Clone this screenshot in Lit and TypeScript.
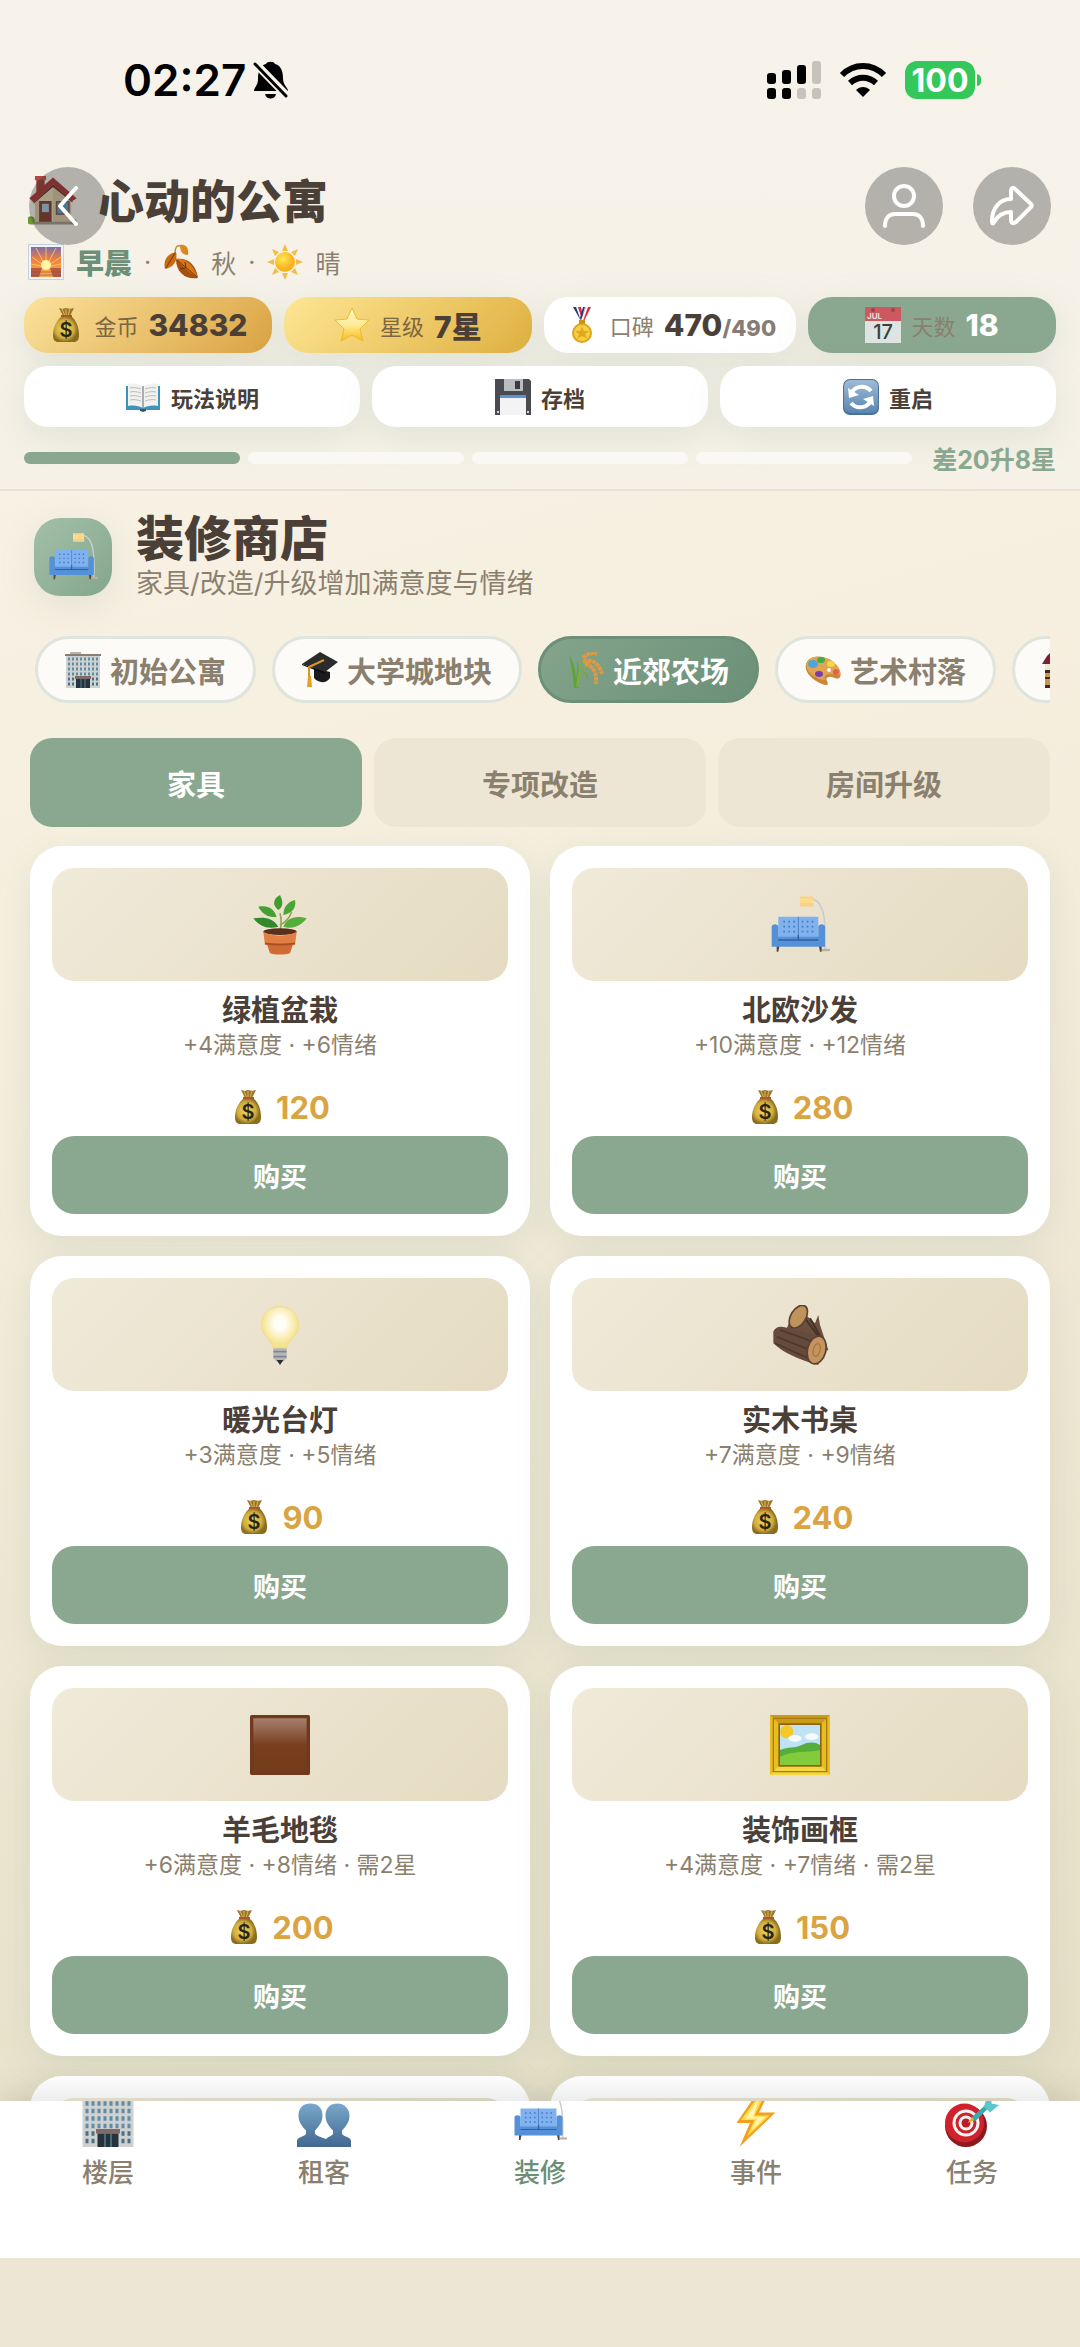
import { LitElement, html, css, svg } from "lit";
import { customElement, state } from "lit/decorators.js";
import { classMap } from "lit/directives/class-map.js";

// every pictogram is drawn in a 36x36 box
const icons = {
  house: svg`
    <path d="M5 15 18 4l13 11v19H5z" fill="#d6c69f" />
    <path d="M18 4v30H8V13z" fill="#e5d8b4" />
    <path d="M6 1h6v9l-6 5z" fill="#96342c" />
    <path d="M5 0h8v3H5z" fill="#b4483e" />
    <path d="M1 16 18 1l17 15-3 2L18 6 4 19z" fill="#a52a2a" />
    <path d="M4 19 18 6l14 12v1L18 8 4 20z" fill="#6a1d1a" />
    <path d="M8 18h9v16H8z" fill="#7c2f22" />
    <path d="M10 20h5v6h-5z" fill="#9fc6de" />
    <path d="M20 18h10v10H20z" fill="#7b4d31" />
    <path d="M21 19h8v8h-8z" fill="#4f93c8" />
    <path d="M3 33h31v2H3z" fill="#9d9280" />
    <circle cx="2" cy="32" r="3" fill="#6c9a2c" />
    <circle cx="33" cy="33" r="2" fill="#55802a" />
  `,
  sunrise: svg`
    <path d="M0 0h36v36H0z" fill="#c4d0e6" />
    <path d="M1 1h34v34H1z" fill="#f4f3f6" />
    <path d="M3 3h30v30H3z" fill="url(#g-dawn)" />
    <path d="m18 23-14-10M18 23 8 4M18 23l0-20M18 23 28 4M18 23l15-10M18 23 3 20M18 23l15-3" stroke="#ffd25a" stroke-width="1" opacity=".8" />
    <path d="M3 24h30v9H3z" fill="#b95a3f" />
    <path d="M14 24h8l3 9H11z" fill="#f6a748" />
    <path d="M3 28h30M3 31h30" stroke="#8d4a52" stroke-width="1" opacity=".6" />
    <circle cx="18" cy="21" r="5" fill="#fff6a8" />
  `,
  leaf: svg`
    <path d="M12 9C12 3 14 1 18 2c2 2 2 4 3 6" fill="none" stroke="#b98a3a" stroke-width="1.4" />
    <path d="M17 1c6-1 9 3 8 10-6 0-8-4-8-10z" fill="#d98a1e" />
    <path d="M13 8C4 10 0 16 2 25c9-2 13-8 11-17z" fill="#c46b14" />
    <path d="M13 15c11-2 20 5 22 19-13 2-22-6-22-19z" fill="#a9500f" />
    <path d="M13 15c11-2 18 8 22 19-8-5-15-11-22-19z" fill="#d4761b" />
    <path d="M12 9 3 24M14 16l20 17M22 18l1 6M17 25l6-1" fill="none" stroke="#783408" stroke-width="1" />
  `,
  sun: svg`
    <path d="m18 0 3 7h-6zM18 36l3-7h-6zM0 18l7-3v6zM36 18l-7-3v6zM5 5l7 3-4 4zM31 5l-3 7-4-4zM5 31l3-7 4 4zM31 31l-7-3 4-4z" fill="#f3bd4a" />
    <circle cx="18" cy="18" r="10" fill="url(#g-sun)" />
  `,
  bag: svg`
    <path d="M11 1c3 1 4 1 7 0 3 1 5 1 8 0l-4 8h-7z" fill="#9a7626" />
    <path d="m14 2 3 7M18 2v7M22 2l-2 7" stroke="#d8b65c" stroke-width="1" />
    <path d="M14 9h9c5 4 8 11 8 19 0 5-2 7-5 7H10c-3 0-5-2-5-7 0-8 4-15 9-19z" fill="url(#g-bag)" />
    <path d="M13 9h11" stroke="#b0552f" stroke-width="2" />
    <text x="18" y="30" text-anchor="middle" font-size="20" font-weight="600" fill="#2c2410">$</text>
  `,
  star: svg`
    <path d="m18 1 5 11 12 1-9 9 3 12-11-6-11 6 3-12-9-9 12-1z" fill="url(#g-star)" stroke="#eebb2c" stroke-width="1" stroke-linejoin="round" />
  `,
  medal: svg`
    <path d="M9 0h5l6 14h-3z" fill="#22357e" />
    <path d="M12 0h2l5 13-2 1z" fill="#f6f4f6" />
    <path d="M14 0h3l2 9-1 3z" fill="#d72b3b" />
    <path d="M27 0h-5l-6 14h4z" fill="#d72b3b" />
    <path d="M24 0h-2l-5 13 2 1z" fill="#f6f4f6" />
    <path d="M21 0h-2l-3 11 1 2z" fill="#22357e" />
    <path d="M15 13h6v4h-6z" fill="#c79316" />
    <circle cx="18" cy="26" r="10" fill="#d9a51c" />
    <circle cx="18" cy="26" r="8" fill="#f8cf40" />
    <path d="m18 19 2 5h5l-4 3 2 5-5-3-5 3 2-5-4-3h5z" fill="#e0aa20" />
  `,
  calendar: svg`
    <path d="M0 0h36v36H0z" fill="#f4f4f6" />
    <path d="M0 0h36v14H0z" fill="#e04553" />
    <circle cx="8" cy="3" r="2" fill="#a02a38" />
    <circle cx="28" cy="3" r="2" fill="#a02a38" />
    <text x="2" y="12" font-size="8" font-weight="600" fill="#ffffff">JUL</text>
    <text x="18" y="32" text-anchor="middle" font-size="20" font-weight="500" fill="#26262a">17</text>
  `,
  book: svg`
    <path d="M1 7h34v24H21l-3 1-3-1H1z" fill="#3f93b8" />
    <path d="M3 5c6-1 11 0 15 2 4-2 9-3 15-2v22c-6-1-11 0-15 2-4-2-9-3-15-2z" fill="#f1f1ee" />
    <path d="M5 9c4-1 8 0 11 1M5 13c4-1 8 0 11 1M5 17c4-1 8 0 11 1M5 21c4-1 8 0 11 1M31 9c-4-1-8 0-11 1M31 13c-4-1-8 0-11 1M31 17c-4-1-8 0-11 1M31 21c-4-1-8 0-11 1" fill="none" stroke="#b9bcc0" stroke-width="1" />
    <path d="M18 7v22" stroke="#8b8f95" stroke-width="1.4" />
    <path d="M15 30h6v2l-3 1-3-1z" fill="#355a6b" />
  `,
  floppy: svg`
    <path d="M0 0h34l2 2v34H0z" fill="#4a4b50" />
    <path d="M9 0h19v12H9z" fill="#b9bcc1" />
    <path d="M20 2h5v8h-5z" fill="#3a3b40" />
    <path d="M5 16h26v20H5z" fill="#f3f3f5" />
    <path d="M5 16h26v3H5z" fill="#5a93d4" />
    <path d="M2 32h2v2H2zM32 32h2v2h-2z" fill="#d8d8db" />
  `,
  refresh: svg`
    <rect x="0" y="0" width="36" height="36" rx="7" fill="#4b7196" />
    <rect x="1" y="1" width="34" height="33" rx="6" fill="url(#g-blue)" />
    <path d="M8 15c3-8 14-10 20-3M28 21c-3 8-14 10-20 3" fill="none" stroke="#ffffff" stroke-width="4" />
    <path d="m5 9 1 10 10-3zM31 27l-1-10-10 3z" fill="#ffffff" />
  `,
  sofa: svg`
    <path d="M23 2c8 0 11 8 10 31" fill="none" stroke="#c9cdd2" stroke-width="1" />
    <path d="M31 33h5" stroke="#b9b2a9" stroke-width="1.4" />
    <path d="M18 1h8v5h-8z" fill="#fbdc8a" />
    <path d="M18 1h8v1h-8zM18 5h8v2h-8z" fill="#f6cf94" />
    <path d="M4 29h2l-1 5H4zM29 29h2v5h-1z" fill="#59443a" />
    <path d="M5 13h12v13H5zM17 13h12v13H17z" fill="#7fb2ee" />
    <path d="M17 13v13" stroke="#4f83c6" stroke-width=".6" />
    <path d="M8 16h8M8 19h8M8 22h8M19 16h9M19 19h9M19 22h9" stroke="#477bc0" stroke-width="1" stroke-dasharray="1 2" />
    <path d="M1 19c0-2 4-2 4 0v6h24v-6c0-2 4-2 4 0v12H1z" fill="#5591d8" />
    <path d="M5 27h24M17 24v3" stroke="#335f9c" stroke-width=".8" />
  `,
  building: svg`
    <path d="M5 0h11v3H5z" fill="#b9b4b0" />
    <path d="M1 3h34v33H1z" fill="#cfd1cf" />
    <path d="M0 2h36v2H0z" fill="#8d7c74" />
    <path d="M3 7h30M3 12h30M3 17h30M3 22h30" stroke="#5f8ba6" stroke-width="3" stroke-dasharray="2 2" />
    <path d="M3 27h6M3 32h6M27 27h6M27 32h6" stroke="#4a7088" stroke-width="3" stroke-dasharray="2 2" />
    <path d="M10 24h16v3H10z" fill="#7e6a66" />
    <path d="M11 27h14v9H11z" fill="#24343e" />
    <path d="M16 27v9M20 27v9" stroke="#5f7c8b" stroke-width="1" />
  `,
  cap: svg`
    <path d="M12 16 28 20v6c-4 6-12 5-16 0z" fill="#1b1b1d" />
    <path d="M0 12 18 0l18 10-13 10z" fill="#2b2b2e" />
    <path d="m0 12 23 8v2L0 13z" fill="#0e0e10" />
    <path d="M22 8 7 15v10" fill="none" stroke="#d99422" stroke-width="2" />
    <path d="M6 24h3l1 11H5z" fill="#e9a02a" />
  `,
  rice: svg`
    <path d="M6 36C5 22 3 12 1 3c5 8 7 17 7 25 1-8 2-13 1-20 3 8 2 18 1 28z" fill="#5ea338" />
    <path d="M9 35C10 20 13 9 18 5M10 31c2-10 6-17 12-19" fill="none" stroke="#7fae45" stroke-width="1.4" />
    <path d="M15 6C19 2 24 0 29 2M15 10c8-3 15-1 19 12M17 12c8 1 12 8 11 20" fill="none" stroke="#dd9a42" stroke-width="4" stroke-dasharray="4 .6" />
    <path d="M15 20c3 1 4 3 5 7" fill="none" stroke="#6fa83f" stroke-width="1.4" />
  `,
  palette: svg`
    <path d="M1 12C4 3 17 3 27 9c7 5 10 12 8 16-2 3-5 1-8 0-4-1-7 1-5 4 2 4 0 5-5 3C7 28-1 20 1 12z" fill="#c98636" />
    <path d="M2 11C5 3 17 3 26 8c7 5 10 11 9 14-2 3-6 0-9 0-5 0-7 2-6 6C10 27-1 19 2 11z" fill="#e0a455" />
    <ellipse cx="8" cy="12" rx="5" ry="4" fill="#4aa6dc" />
    <ellipse cx="16" cy="8" rx="4" ry="3" fill="#3fae49" />
    <ellipse cx="26" cy="12" rx="4" ry="3" fill="#f4d643" />
    <ellipse cx="14" cy="22" rx="4" ry="3" fill="#7a3aa8" />
    <ellipse cx="31" cy="20" rx="3" ry="3" fill="#e6604a" />
    <ellipse cx="24" cy="18" rx="2" ry="2" fill="#fbfaf5" />
  `,
  castle: svg`
    <path d="m0 12 5-8 3-3h20l8 11z" fill="#7c2036" />
    <path d="M3 12h30v6H3z" fill="#f1e6cf" />
    <path d="M3 18h30v18H3z" fill="#c79a4a" />
    <path d="M3 18h30v3H3zM3 25h30v2H3zM3 33h30v3H3z" fill="#3c2b1d" />
    <path d="M14 26h8v10h-8z" fill="#4a2a18" />
  `,
  plant: svg`
    <path d="M18 22c1-5 1-8 0-11M18 18c4-2 6-5 7-8" fill="none" stroke="#93a558" stroke-width="1" />
    <path d="M17 9c-4-3-3-7 1-9 2 4 2 7-1 9z" fill="#3f9c2e" />
    <path d="M20 12c0-5 3-8 7-9 1 5-2 8-7 9z" fill="#4aa534" />
    <path d="M16 13C11 14 7 11 5 7c6-1 9 1 11 6z" fill="#44a030" />
    <path d="M17 19C10 21 5 18 2 14c7-1 12 0 15 5z" fill="#338a2a" />
    <path d="M20 19c2-5 7-7 14-5-3 4-8 7-14 5z" fill="#55ad3c" />
    <ellipse cx="18" cy="22" rx="10" ry="2" fill="#5b2f1b" />
    <path d="M8 22c5 3 15 3 20 0l-1 8H9z" fill="#e27f45" />
    <path d="M10 29h16l-2 6c-2 1-10 1-12 0z" fill="#cf6c36" />
    <path d="M9 29c6 1 12 1 18 0" fill="none" stroke="#a84f22" stroke-width="1" />
  `,
  bulb: svg`
    <path d="M18 1c7 0 11 5 11 11 0 7-6 8-7 14h-8c-1-6-7-7-7-14C7 6 11 1 18 1z" fill="url(#g-bulb)" stroke="#f2dd84" stroke-width=".6" />
    <path d="M14 26h8v6l-2 2h-4l-2-2z" fill="#b4b6ba" />
    <path d="M14 28h8M14 31h8" stroke="#85878c" stroke-width="1" />
    <path d="M16 33h4l-2 3z" fill="#2d2d30" />
  `,
  wood: svg`
    <path d="M16 1 27 11l2-5 1 6 5 15-12 3-13-16z" fill="#6b5040" />
    <path d="M24 8l9 16M21 8l9 12" stroke="#46332a" stroke-width="1.2" />
    <ellipse cx="17" cy="7" rx="5" ry="8" transform="rotate(32 17 7)" fill="#5a4134" />
    <ellipse cx="17" cy="7" rx="4" ry="7" transform="rotate(32 17 7)" fill="#bf935a" />
    <path d="M2 16c2-4 6-3 9-2l20 5-2 17c-12-3-22-8-27-13z" fill="#664a3b" />
    <path d="M6 15l20 7M4 19l20 8M3 23l20 9" stroke="#4c382d" stroke-width="1" />
    <ellipse cx="28" cy="27" rx="6" ry="9" transform="rotate(14 28 27)" fill="#5a4134" />
    <ellipse cx="28" cy="27" rx="5" ry="8" transform="rotate(14 28 27)" fill="#c4935f" />
    <ellipse cx="28" cy="27" rx="2" ry="4" transform="rotate(14 28 27)" fill="none" stroke="#a97743" stroke-width=".8" />
  `,
  rug: svg`
    <rect x="0" y="0" width="36" height="36" rx="1" fill="#71391b" />
    <path d="M2 2h32v32H2z" fill="url(#g-rug)" />
  `,
  frame: svg`
    <path d="M0 0h36v36H0z" fill="#e8bd22" />
    <path d="m0 0 6 6h24l6-6z" fill="#c99b18" />
    <path d="m0 36 6-6h24l6 6z" fill="#f6d740" />
    <path d="M2 2h32v32H2z" fill="none" stroke="#a97b12" stroke-width=".8" />
    <path d="M5 5h26v26H5z" fill="#8f6414" />
    <path d="M6 6h24v24H6z" fill="#bfe2f5" />
    <circle cx="10" cy="10" r="4" fill="#f7c926" />
    <ellipse cx="15" cy="14" rx="4" ry="2" fill="#f7f9fc" />
    <ellipse cx="25" cy="13" rx="4" ry="2" fill="#f7f9fc" />
    <path d="M6 21c5-2 9-1 13-3s8-2 11 0v12H6z" fill="#55ad3c" />
    <path d="M6 25c9-4 16-2 24-4v9H6z" fill="#84cb3c" />
  `,
  users: svg`
    <path d="M19 36v-4c0-3 5-3 5-5v-2c-3-3-5-6-5-10 0-5 3-8 8-8 4 0 8 3 8 8 0 4-2 7-5 10v2c0 2 6 2 6 5v4z" fill="url(#g-user)" />
    <path d="M0 36v-4c0-3 6-3 6-5v-2c-3-3-5-6-5-10 0-5 3-8 8-8s8 3 8 8c0 4-2 7-5 10v2c0 2 9 3 10 6v3z" fill="url(#g-user)" />
  `,
  bolt: svg`
    <path d="M18 1 5 20h9L7 36l24-23H20l6-12z" fill="#f59f1f" />
    <path d="M19 3 8 18h9l-5 11 15-14H17l6-12z" fill="#ffe054" />
    <path d="M20 4 11 17h8l-4 8 9-9h-8z" fill="#fff6b5" />
  `,
  target: svg`
    <circle cx="14" cy="22" r="14" fill="#8c1820" />
    <ellipse cx="13" cy="20" rx="13" ry="13" fill="#d0222d" />
    <circle cx="14" cy="20" r="9" fill="#fbf3f2" />
    <circle cx="14" cy="20" r="7" fill="#c8242e" />
    <circle cx="14" cy="20" r="5" fill="#fbf3f2" />
    <circle cx="14" cy="20" r="3" fill="#b91e28" />
    <path d="m15 20 3-4 2 2z" fill="#f0b429" />
    <path d="M18 16 28 7l2 2-10 10z" fill="#35aab5" />
    <path d="m26 9 2-6 3 0 0 4 5 1-6 5z" fill="#5cc6cd" />
  `,
};

type IconName = keyof typeof icons;

interface Item {
  icon: IconName;
  name: string;
  desc: string;
  price: number;
}

const regions: { icon: IconName; name: string }[] = [
  { icon: "building", name: "初始公寓" },
  { icon: "cap", name: "大学城地块" },
  { icon: "rice", name: "近郊农场" },
  { icon: "palette", name: "艺术村落" },
  { icon: "castle", name: "" },
];

const items: Item[] = [
  { icon: "plant", name: "绿植盆栽", desc: "+4满意度 · +6情绪", price: 120 },
  { icon: "sofa", name: "北欧沙发", desc: "+10满意度 · +12情绪", price: 280 },
  { icon: "bulb", name: "暖光台灯", desc: "+3满意度 · +5情绪", price: 90 },
  { icon: "wood", name: "实木书桌", desc: "+7满意度 · +9情绪", price: 240 },
  { icon: "rug", name: "羊毛地毯", desc: "+6满意度 · +8情绪 · 需2星", price: 200 },
  { icon: "frame", name: "装饰画框", desc: "+4满意度 · +7情绪 · 需2星", price: 150 },
];

const navItems: { icon: IconName; name: string }[] = [
  { icon: "building", name: "楼层" },
  { icon: "users", name: "租客" },
  { icon: "sofa", name: "装修" },
  { icon: "bolt", name: "事件" },
  { icon: "target", name: "任务" },
];

@customElement("app-root")
export class AppRoot extends LitElement {
  @state() region = 2;
  @state() tab = 0;
  @state() nav = 2;

  static styles = css`
    :host {
      --green: #8aa890;
      --green-dark: #6b8f77;
      --ink: #4a4038;
      --muted: #8b7f6e;
      --gold: #d9a441;
      --shadow: 0 10px 36px rgba(107, 143, 119, 0.14);
      display: flex;
      flex-direction: column;
      height: 100vh;
      overflow: hidden;
      box-sizing: border-box;
      color: var(--ink);
      background: linear-gradient(165deg, #f9f4ea 0%, #f6efdf 35%, #e7e0c8 88%, #e4ddc4 100%);
      font-family: Inter, "Noto Sans CJK SC", sans-serif;
      font-size: 22px;
    }

    * {
      box-sizing: border-box;
    }

    h1,
    h2,
    h3,
    p {
      margin: 0;
    }

    button {
      margin: 0;
      padding: 0;
      border: 0;
      background: none;
      color: inherit;
      font: inherit;
      cursor: pointer;
    }

    svg {
      display: block;
      flex: none;
    }

    .defs {
      position: absolute;
    }

    .icon {
      width: 36px;
      height: 36px;
    }

    .icon.medium {
      width: 50px;
      height: 50px;
    }

    .icon.large {
      width: 60px;
      height: 60px;
    }

    header {
      position: relative;
      flex: none;
      padding: 0 24px 13px;
      border-bottom: 2px solid #e6e3d9;
      background: linear-gradient(180deg, #f7f3eb, #f5f1e6);
    }

    .status {
      display: flex;
      align-items: center;
      justify-content: space-between;
      height: 167px;
      padding: 0 75px 8px 99px;
      color: #000000;
    }

    .status div {
      display: flex;
      align-items: center;
      gap: 18px;
    }

    .status .clock {
      gap: 7px;
      font-size: 44px;
      font-weight: 600;
    }

    .battery {
      font-size: 32px;
      font-weight: 700;
    }

    .title-row {
      display: flex;
      align-items: center;
      gap: 30px;
      height: 78px;
      padding-right: 5px;
    }

    .title-row h1 {
      display: flex;
      align-items: center;
      gap: 20px;
      flex: 1;
      padding: 0 0 10px 4px;
      font-size: 46px;
      line-height: 56px;
      font-weight: 900;
    }

    .round {
      display: grid;
      place-items: center;
      width: 78px;
      height: 78px;
      border-radius: 50%;
      background: rgba(60, 60, 60, 0.36);
    }

    .round.back {
      position: absolute;
      top: 167px;
      left: 29px;
    }

    .season {
      display: flex;
      align-items: center;
      gap: 12px;
      height: 34px;
      padding-left: 4px;
      color: var(--muted);
      font-size: 25px;
    }

    .season strong {
      color: var(--green-dark);
      font-size: 28px;
      font-weight: 900;
    }

    .stats,
    .actions {
      display: flex;
      gap: 12px;
    }

    .stats {
      margin-top: 18px;
    }

    .stat {
      display: flex;
      flex: 1;
      align-items: center;
      justify-content: center;
      gap: 10px;
      height: 56px;
      padding: 0 20px;
      border-radius: 24px;
      background: #ffffff;
      box-shadow: var(--shadow);
      white-space: nowrap;
    }

    .stat span {
      color: var(--muted);
    }

    .stat strong {
      font-size: 30px;
      font-weight: 800;
    }

    .stat small {
      color: #857d75;
      font-size: 22px;
    }

    .stat.coin {
      background: linear-gradient(135deg, #fbe29c, #dba343);
    }

    .stat.level {
      background: linear-gradient(135deg, #fee694, #dfb040);
    }

    .stat.coin span,
    .stat.level span {
      color: #7d6642;
    }

    .stat.day {
      background: var(--green);
      color: #ffffff;
    }

    .stat.day .icon {
      opacity: 0.8;
    }

    .actions {
      margin-top: 13px;
    }

    .actions button {
      display: flex;
      flex: 1;
      align-items: center;
      justify-content: center;
      gap: 10px;
      height: 61px;
      border-radius: 24px;
      background: #ffffff;
      box-shadow: var(--shadow);
      font-weight: 700;
    }

    .progress {
      display: flex;
      align-items: center;
      gap: 8px;
      height: 36px;
      margin-top: 13px;
      color: var(--green);
      font-size: 25px;
      font-weight: 700;
    }

    .progress i {
      flex: 1;
      height: 12px;
      border-radius: 6px;
      background: #faf8f4;
    }

    .progress i.done {
      background: var(--green);
    }

    .progress span {
      margin-left: 12px;
    }

    main {
      flex: 1;
      min-height: 0;
      overflow: hidden;
      padding: 24px 30px 0;
    }

    .heading {
      display: flex;
      align-items: center;
      gap: 24px;
      height: 84px;
      padding-left: 4px;
    }

    .badge {
      display: grid;
      place-items: center;
      width: 78px;
      height: 78px;
      border-radius: 26px;
      background: linear-gradient(135deg, #a3c0a9, #84a68c);
      box-shadow: var(--shadow);
    }

    .heading h2 {
      font-size: 48px;
      line-height: 54px;
      font-weight: 900;
    }

    .heading p {
      color: var(--muted);
      font-size: 27px;
      line-height: 36px;
    }

    .regions {
      display: flex;
      gap: 16px;
      overflow: hidden;
      margin-top: 37px;
      padding-left: 5px;
    }

    .regions button {
      display: flex;
      flex: none;
      align-items: center;
      gap: 9px;
      height: 67px;
      padding: 0 27px;
      border: 3px solid #dfe4dc;
      border-radius: 34px;
      background: #fcfbf7;
      color: var(--muted);
      font-size: 29px;
      font-weight: 700;
    }

    .regions button.active {
      border-color: var(--green-dark);
      background: linear-gradient(135deg, #84a58c, #6b8f77);
      color: #ffffff;
    }

    .tabs {
      display: grid;
      grid-template-columns: repeat(3, 1fr);
      gap: 12px;
      margin-top: 35px;
    }

    .tabs button {
      height: 89px;
      border-radius: 22px;
      background: #ede6d5;
      color: var(--muted);
      font-size: 29px;
      font-weight: 700;
    }

    .tabs button.active {
      background: var(--green);
      color: #ffffff;
    }

    .grid {
      display: grid;
      grid-template-columns: 1fr 1fr;
      gap: 20px;
      margin-top: 19px;
    }

    .card {
      display: flex;
      flex-direction: column;
      padding: 22px;
      border-radius: 32px;
      background: #ffffff;
      box-shadow: var(--shadow);
      text-align: center;
    }

    .preview {
      display: grid;
      place-items: center;
      height: 113px;
      border-radius: 22px;
      background: linear-gradient(135deg, #f0ead9, #e5dbc2);
    }

    .card h3 {
      margin-top: 12px;
      font-size: 29px;
      line-height: 36px;
      font-weight: 700;
    }

    .card p {
      color: var(--muted);
      font-size: 23px;
      line-height: 32px;
    }

    .price {
      display: flex;
      align-items: center;
      justify-content: center;
      gap: 10px;
      height: 36px;
      margin-top: 28px;
      color: var(--gold);
      font-size: 31px;
      font-weight: 700;
    }

    .buy {
      height: 78px;
      margin-top: 11px;
      border-radius: 22px;
      background: var(--green);
      color: #ffffff;
      font-size: 27px;
      font-weight: 700;
    }

    nav {
      position: relative;
      display: grid;
      grid-template-columns: repeat(5, 1fr);
      flex: none;
      height: 157px;
      overflow: hidden;
      background: #ffffff;
      box-shadow: 0 -6px 30px rgba(74, 90, 80, 0.16);
    }

    nav button {
      display: flex;
      flex-direction: column;
      align-items: center;
      gap: 10px;
      height: 96px;
      margin-top: -8px;
      color: var(--muted);
      font-size: 26px;
      line-height: 32px;
      font-weight: 500;
    }

    nav .icon {
      width: 54px;
      height: 54px;
    }

    nav button.active {
      color: var(--green-dark);
    }

    nav button.active .icon {
      transform: translateY(-4px);
    }

    footer {
      position: relative;
      flex: none;
      height: 89px;
      background: #ede6d5;
    }
  `;

  renderIcon(name: IconName, size = "") {
    return html`<svg class="icon ${size}" viewBox="0 0 36 36" fill="none" aria-hidden="true">
      ${icons[name]}
    </svg>`;
  }

  renderDefs() {
    return html`
      <svg class="defs" width="0" height="0" aria-hidden="true">
        <linearGradient id="g-dawn" x2="0" y2="1">
          <stop stop-color="#7a6fae" />
          <stop offset=".4" stop-color="#ee7d45" />
          <stop offset="1" stop-color="#fbb03b" />
        </linearGradient>
        <radialGradient id="g-sun" cx=".4" cy=".35">
          <stop stop-color="#ffe957" />
          <stop offset="1" stop-color="#f8b31c" />
        </radialGradient>
        <radialGradient id="g-bag" cx=".45" cy=".5">
          <stop stop-color="#f0d763" />
          <stop offset=".7" stop-color="#d0ad3c" />
          <stop offset="1" stop-color="#8b6d1e" />
        </radialGradient>
        <linearGradient id="g-star" x2="0" y2="1">
          <stop stop-color="#fff6c9" />
          <stop offset=".5" stop-color="#ffec9a" />
          <stop offset="1" stop-color="#f9bb16" />
        </linearGradient>
        <linearGradient id="g-blue" x2="0" y2="1">
          <stop stop-color="#9dbbd6" />
          <stop offset="1" stop-color="#5a86b1" />
        </linearGradient>
        <radialGradient id="g-bulb" cy=".4">
          <stop offset=".3" stop-color="#fffef6" />
          <stop offset="1" stop-color="#f6e38e" />
        </radialGradient>
        <linearGradient id="g-rug" x2="0" y2="1">
          <stop stop-color="#a5806f" />
          <stop offset=".5" stop-color="#793f1f" />
          <stop offset="1" stop-color="#733c1a" />
        </linearGradient>
        <linearGradient id="g-user" x2="0" y2="1">
          <stop stop-color="#79a7cb" />
          <stop offset="1" stop-color="#42688f" />
        </linearGradient>
      </svg>
    `;
  }

  renderStatus() {
    return html`
      <div class="status">
        <div class="clock">
          02:27
          <svg width="36" height="38" viewBox="0 0 36 38" aria-hidden="true">
            <path d="M1 30c0-4 4-5 4-12C5 9 8 4 13 3c1-3 8-3 9 0 5 1 8 6 8 14 0 8 5 9 5 13z" />
            <path d="M12 33h11c-1 6-10 6-11 0z" />
            <path d="m3 3 31 32" stroke="#f7f3eb" stroke-width="8" />
            <path d="m2 3 31 32" stroke="#000000" stroke-width="3" stroke-linecap="round" />
          </svg>
        </div>
        <div>
          <svg width="54" height="38" viewBox="0 0 54 38" aria-hidden="true">
            <rect x="0" y="12" width="9" height="11" rx="3" />
            <rect x="15" y="9" width="9" height="14" rx="3" />
            <rect x="30" y="4" width="9" height="19" rx="3" />
            <rect x="45" y="0" width="9" height="23" rx="3" fill="#c6c3bc" />
            <rect x="0" y="27" width="9" height="11" rx="3" />
            <rect x="15" y="27" width="9" height="11" rx="3" />
            <rect x="30" y="27" width="9" height="11" rx="3" fill="#c6c3bc" />
            <rect x="45" y="27" width="9" height="11" rx="3" fill="#c6c3bc" />
          </svg>
          <svg width="48" height="36" viewBox="0 0 48 36" aria-hidden="true">
            <path d="M3 13c12-12 30-12 42 0" fill="none" stroke="#000000" stroke-width="6" />
            <path d="M11 21c8-7 18-7 26 0" fill="none" stroke="#000000" stroke-width="6" />
            <path d="M17 28c4-4 10-4 14 0l-7 7z" />
          </svg>
          <svg class="battery" width="76" height="38" viewBox="0 0 76 38" role="img" aria-label="100%">
            <rect width="70" height="38" rx="12" fill="#34c759" />
            <path d="M72 13c6 1 6 11 0 12z" fill="#34c759" />
            <text x="35" y="31" text-anchor="middle" fill="#ffffff">100</text>
          </svg>
        </div>
      </div>
    `;
  }

  renderHeader() {
    return html`
      <header>
        ${this.renderStatus()}
        <div class="title-row">
          <h1>${this.renderIcon("house", "medium")}心动的公寓</h1>
          <button class="round" aria-label="个人">
            <svg width="42" height="44" viewBox="0 0 42 44" fill="none" stroke="#ffffff" stroke-width="4" stroke-linecap="round">
              <circle cx="21" cy="12" r="10" />
              <path d="M2 42c0-8 4-12 10-12h18c6 0 10 4 10 12" />
            </svg>
          </button>
          <button class="round" aria-label="分享">
            <svg width="44" height="40" viewBox="0 0 44 40" fill="none" stroke="#ffffff" stroke-width="4" stroke-linejoin="round">
              <path d="M21 5c0-3 2-4 4-2l16 15c1 1 1 2 0 3L26 36c-3 2-5 1-5-2v-8C12 26 7 31 4 36c-1 2-2 2-2-1C2 23 9 13 21 13z" />
            </svg>
          </button>
        </div>
        <button class="round back" aria-label="返回">
          <svg width="22" height="40" viewBox="0 0 22 40" fill="none" stroke="#ffffff" stroke-width="4" stroke-linecap="round" stroke-linejoin="round">
            <path d="M19 2 3 20l16 18" />
          </svg>
        </button>
        <div class="season">
          ${this.renderIcon("sunrise")}<strong>早晨</strong><span>·</span>
          ${this.renderIcon("leaf")}<span>秋</span><span>·</span>
          ${this.renderIcon("sun")}<span>晴</span>
        </div>
        <div class="stats">
          <div class="stat coin">${this.renderIcon("bag")}<span>金币</span><strong>34832</strong></div>
          <div class="stat level">${this.renderIcon("star")}<span>星级</span><strong>7星</strong></div>
          <div class="stat">
            ${this.renderIcon("medal")}<span>口碑</span><strong>470<small>/490</small></strong>
          </div>
          <div class="stat day">${this.renderIcon("calendar")}<span>天数</span><strong>18</strong></div>
        </div>
        <div class="actions">
          <button>${this.renderIcon("book")}玩法说明</button>
          <button>${this.renderIcon("floppy")}存档</button>
          <button>${this.renderIcon("refresh")}重启</button>
        </div>
        <div class="progress">
          <i class="done"></i><i></i><i></i><i></i>
          <span>差20升8星</span>
        </div>
      </header>
    `;
  }

  renderCard(item: Item) {
    return html`
      <article class="card">
        <div class="preview">${this.renderIcon(item.icon, "large")}</div>
        <h3>${item.name}</h3>
        <p>${item.desc}</p>
        <div class="price">${this.renderIcon("bag")}${item.price}</div>
        <button class="buy">购买</button>
      </article>
    `;
  }

  render() {
    return html`
      ${this.renderDefs()} ${this.renderHeader()}
      <main>
        <div class="heading">
          <div class="badge">${this.renderIcon("sofa", "medium")}</div>
          <div>
            <h2>装修商店</h2>
            <p>家具/改造/升级增加满意度与情绪</p>
          </div>
        </div>
        <div class="regions">
          ${regions.map(
            (r, i) => html`
              <button class=${classMap({ active: i === this.region })} @click=${() => (this.region = i)}>
                ${this.renderIcon(r.icon)}${r.name}
              </button>
            `
          )}
        </div>
        <div class="tabs">
          ${["家具", "专项改造", "房间升级"].map(
            (name, i) => html`
              <button class=${classMap({ active: i === this.tab })} @click=${() => (this.tab = i)}>
                ${name}
              </button>
            `
          )}
        </div>
        <div class="grid">
          ${items.map((item) => this.renderCard(item))}
          <article class="card"><div class="preview"></div></article>
          <article class="card"><div class="preview"></div></article>
        </div>
      </main>
      <nav>
        ${navItems.map(
          (n, i) => html`
            <button class=${classMap({ active: i === this.nav })} @click=${() => (this.nav = i)}>
              ${this.renderIcon(n.icon)}${n.name}
            </button>
          `
        )}
      </nav>
      <footer></footer>
    `;
  }
}
